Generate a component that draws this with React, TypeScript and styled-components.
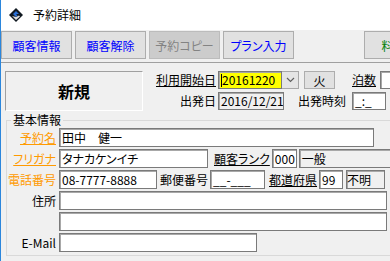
import styled, { createGlobalStyle } from "styled-components";

const GlobalStyle = createGlobalStyle`
  html, body {
    margin: 0;
    padding: 0;
    background: #f0f0f0;
  }
  body {
    font-family: "Noto Sans CJK JP", "Noto Sans", sans-serif;
    font-size: 12px;
    font-feature-settings: "palt";
    color: #000;
  }
`;

function AppIcon() {
  return (
    <svg width="14" height="14" viewBox="0 0 14 14">
      <polygon points="7,0 14,7 7,14 0,7" fill="#101820" />
      <polygon points="7,3 10,6 7,6 8.5,7.5 7,9 4,6" fill="#2a6fd6" />
      <polygon points="7,9 10,7.5 11,8.5 7,12 3,8" fill="#ffffff" opacity="0.85" />
    </svg>
  );
}

function Chevron() {
  return (
    <svg width="9" height="6" viewBox="0 0 9 6">
      <polyline points="1,1 4.5,4.5 8,1" fill="none" stroke="#606060" strokeWidth="1.2" />
    </svg>
  );
}

export default function App() {
  return (
    <>
      <GlobalStyle />
      <Window>
        <TitleBar>
          <AppIcon />
          <Title>予約詳細</Title>
        </TitleBar>

        <Toolbar>
          <ToolButton>顧客情報</ToolButton>
          <ToolButton>顧客解除</ToolButton>
          <ToolButton $disabled>予約コピー</ToolButton>
          <ToolButton>プラン入力</ToolButton>
          <ToolButton $green $push>料金表</ToolButton>
        </Toolbar>

        <Header>
          <NewBox>新規</NewBox>
          <HeaderFields>
            <Row>
              <Label $w={68} $right $underline>利用開始日</Label>
              <Combo>
                <Box $w={64} $yellow>
                  <Caret />
                  20161220
                </Box>
                <ComboArrow>
                  <Chevron />
                </ComboArrow>
              </Combo>
              <DayButton>火</DayButton>
              <Label $underline $ml={15}>泊数</Label>
              <Box $w={30} $ml={2} />
            </Row>
            <Row>
              <Label $w={68} $right>出発日</Label>
              <Box $w={66} $ro>2016/12/21</Box>
              <Label $ml={12}>出発時刻</Label>
              <Box $w={34} $ml={4}>_:_</Box>
            </Row>
          </HeaderFields>
        </Header>

        <Group>
          <Legend>基本情報</Legend>
          <GroupRow>
            <Label $w={49} $right $orange $underline>予約名</Label>
            <Box $w={315} $ml={3}>田中　健一</Box>
          </GroupRow>
          <GroupRow>
            <Label $w={49} $right $orange $underline>フリガナ</Label>
            <Box $w={149} $ml={3}>タナカケンイチ</Box>
            <Label $underline $ml={6}>顧客ランク</Label>
            <Box $w={25} $ml={2}>000</Box>
            <Box $w={93} $ml={2} $ro>一般</Box>
          </GroupRow>
          <GroupRow>
            <Label $w={49} $right $orange>電話番号</Label>
            <Box $w={98} $ml={3}>08-7777-8888</Box>
            <Label $ml={3}>郵便番号</Label>
            <Box $w={55} $ml={2}>__-___</Box>
            <Label $underline $ml={4}>都道府県</Label>
            <Box $w={24} $ml={2}>99</Box>
            <Box $w={39} $ml={3} $ro $tight>不明</Box>
          </GroupRow>
          <GroupRow>
            <Label $w={49} $right>住所</Label>
            <Box $w={328} $ml={3} />
          </GroupRow>
          <GroupRow>
            <Label $w={49} />
            <Box $w={328} $ml={3} />
          </GroupRow>
          <GroupRow>
            <Label $w={49} $right>E-Mail</Label>
            <Box $w={198} $ml={3} />
          </GroupRow>
        </Group>
      </Window>
    </>
  );
}

const Window = styled.div`
  width: 389px;
  height: 261px;
  overflow: hidden;
  border-left: 1px solid #2b86dc;
  background: #f0f0f0;
`;

const TitleBar = styled.div`
  height: 30px;
  background: #fff;
  display: flex;
  align-items: center;
  padding-left: 8px;
  gap: 10px;
`;

const Title = styled.span`
  font-size: 12px;
  line-height: 14px;
`;

const Toolbar = styled.div`
  height: 31px;
  padding-top: 1px;
  display: flex;
  align-items: flex-start;
  gap: 3px;
  border-bottom: 1px solid #a0a0a0;
  white-space: nowrap;
`;

const ToolButton = styled.div<{ $disabled?: boolean; $green?: boolean; $push?: boolean }>`
  flex: none;
  width: 71px;
  height: 28px;
  box-sizing: border-box;
  display: flex;
  align-items: center;
  justify-content: center;
  border: 1px solid ${(p) => (p.$disabled ? "#bcbcbc" : "#adadad")};
  background: ${(p) => (p.$disabled ? "#cccccc" : "#e1e1e1")};
  color: ${(p) => (p.$disabled ? "#838383" : p.$green ? "#008000" : "#0000ff")};
  font-size: 12px;
  margin-left: ${(p) => (p.$push ? "67px" : "0")};
`;

const Header = styled.div`
  display: flex;
  align-items: flex-start;
  padding: 8px 0 0 4px;
  height: 42px;
`;

const NewBox = styled.div`
  flex: none;
  width: 138px;
  height: 40px;
  box-sizing: border-box;
  border-top: 1px solid #a0a0a0;
  border-left: 1px solid #a0a0a0;
  border-right: 1px solid #fff;
  border-bottom: 1px solid #fff;
  display: flex;
  align-items: center;
  justify-content: center;
  font-size: 16px;
  font-weight: bold;
`;

const HeaderFields = styled.div`
  display: flex;
  flex-direction: column;
  gap: 3px;
  margin-left: 5px;
`;

const Row = styled.div`
  display: flex;
  align-items: center;
  height: 18px;
  gap: 2px;
  white-space: nowrap;
`;

const Label = styled.span<{
  $w?: number;
  $right?: boolean;
  $underline?: boolean;
  $orange?: boolean;
  $ml?: number;
}>`
  flex: none;
  ${(p) => (p.$w ? `width: ${p.$w}px;` : "")}
  text-align: ${(p) => (p.$right ? "right" : "left")};
  text-decoration: ${(p) => (p.$underline ? "underline" : "none")};
  text-underline-offset: 1px;
  color: ${(p) => (p.$orange ? "#ff9a00" : "#000")};
  margin-left: ${(p) => p.$ml ?? 0}px;
  font-size: 12px;
  line-height: 14px;
`;

const Box = styled.div<{
  $w: number;
  $ml?: number;
  $ro?: boolean;
  $yellow?: boolean;
  $tight?: boolean;
}>`
  flex: none;
  width: ${(p) => p.$w}px;
  height: 100%;
  box-sizing: border-box;
  margin-left: ${(p) => p.$ml ?? 0}px;
  border: 1px solid #7a7a7a;
  box-shadow: inset 1px 1px 0 #a8a8a8;
  background: ${(p) => (p.$yellow ? "#ffff00" : p.$ro ? "#f0f0f0" : "#fff")};
  padding-left: ${(p) => (p.$tight ? 0 : 2)}px;
  display: flex;
  align-items: center;
  overflow: hidden;
  font-size: 12px;
  line-height: 14px;
`;

const Caret = styled.span`
  width: 1px;
  height: 13px;
  background: #000;
`;

const Combo = styled.div`
  display: flex;
  height: 18px;
`;

const ComboArrow = styled.div`
  width: 17px;
  height: 18px;
  box-sizing: border-box;
  background: #e5e5e5;
  border: 1px solid #a8a8a8;
  border-left: none;
  display: flex;
  align-items: center;
  justify-content: center;
`;

const DayButton = styled.div`
  flex: none;
  width: 31px;
  height: 18px;
  box-sizing: border-box;
  margin-left: 3px;
  border: 1px solid #adadad;
  background: #e1e1e1;
  display: flex;
  align-items: center;
  justify-content: center;
`;

const Group = styled.fieldset`
  margin: 0 0 0 5px;
  padding: 1px 0 3px 0;
  width: 400px;
  border: 1px solid #d9d9d9;
  display: flex;
  flex-direction: column;
  gap: 2px;
  min-width: 0;
`;

const Legend = styled.legend`
  margin-left: 4px;
  padding: 0 2px;
  font-size: 12px;
  line-height: 14px;
`;

const GroupRow = styled.div`
  display: flex;
  align-items: center;
  height: 19px;
  white-space: nowrap;
`;
